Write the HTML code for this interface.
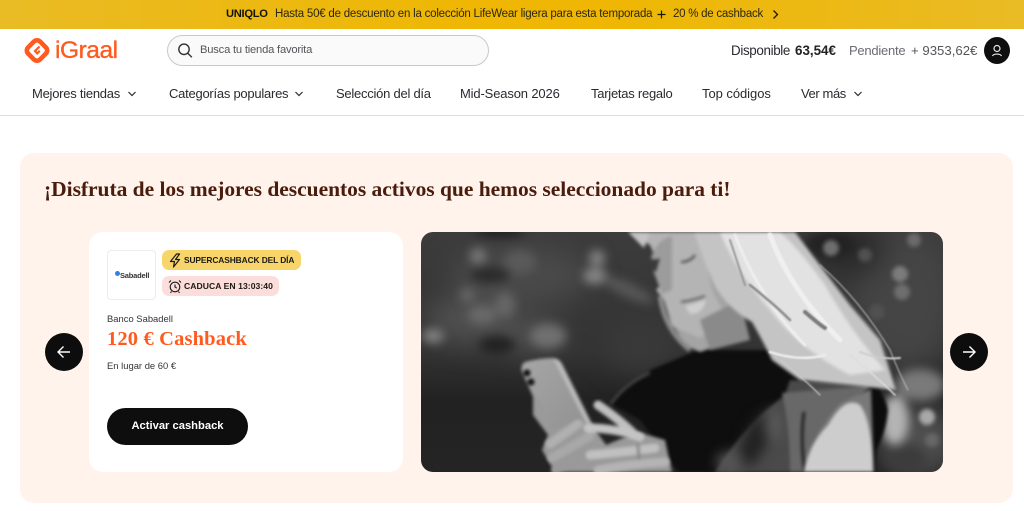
<!DOCTYPE html>
<html lang="es"><head><meta charset="utf-8"><title>iGraal</title>
<style>
*{box-sizing:border-box}
html,body{margin:0;padding:0;width:1024px;height:511px;overflow:hidden;background:#fff;font-family:"Liberation Sans",sans-serif;color:#26262b}
.a{position:absolute;white-space:nowrap}
#top{position:absolute;left:0;top:0;width:1024px;height:29px;background:linear-gradient(90deg,#e9bb25 0,#efb703 45%,#efb703 60%,#e9bb25 100%)}
.nav{top:85px;font-size:13px;line-height:18px;color:#2a2a30;letter-spacing:-.25px}
svg{position:absolute;display:block}
</style></head><body>
<div id="top"></div>
<div class="a" style="left:226px;top:7px;font-size:11.2px;line-height:14px;font-weight:700;color:#16140a;letter-spacing:-.3px">UNIQLO</div>
<div class="a" style="left:275px;top:7px;font-size:11.5px;line-height:14px;color:#2e2710;letter-spacing:-.22px">Hasta 50€ de descuento en la colección LifeWear ligera para esta temporada</div>
<svg style="left:656px;top:9px" width="11" height="11" viewBox="0 0 11 11"><path d="M5.500 1.500v8M1.500 5.500h8" stroke="#1e1a0a" stroke-width="1.200" fill="none"/></svg>
<div class="a" style="left:673px;top:7px;font-size:11.500px;line-height:14px;color:#2e2710;letter-spacing:-.25px">20 % de cashback</div>
<svg style="left:771px;top:9px" width="9" height="11" viewBox="0 0 9 11"><path d="M2.500 1.500l4 4-4 4" stroke="#1e1a0a" stroke-width="1.300" fill="none"/></svg>

<svg style="left:23px;top:36px" width="28" height="29" viewBox="0 0 28 29"><rect x="5.500" y="6" width="17" height="17" rx="4.500" transform="rotate(45 14 14.500)" fill="none" stroke="#ff5a1f" stroke-width="4.600"/><path d="M16.500 10.500l-4.500 4.500 2.200 2.400 2.600-2.600" fill="none" stroke="#ff5a1f" stroke-width="2.200"/></svg>
<div class="a" style="left:55px;top:36px;font-size:24.500px;line-height:29px;color:#ff5a1f;letter-spacing:-.45px;-webkit-text-stroke:.35px #ff5a1f">iGraal</div>

<div class="a" style="left:167px;top:35px;width:322px;height:31px;border:1px solid #c9c9c9;border-radius:16px;background:#fafafa"></div>
<svg style="left:177px;top:42px" width="16" height="17" viewBox="0 0 16 17"><circle cx="7" cy="7.300" r="5.200" fill="none" stroke="#333" stroke-width="1.400"/><path d="M10.800 11.200l4 4" stroke="#333" stroke-width="1.400"/></svg>
<div class="a" style="left:200px;top:43px;font-size:11.200px;line-height:14px;color:#55555a;letter-spacing:-.2px">Busca tu tienda favorita</div>

<div class="a" style="left:731px;top:43px;font-size:13.400px;line-height:16px;color:#2a2a30;letter-spacing:-.35px">Disponible</div>
<div class="a" style="left:795px;top:43px;font-size:13.400px;line-height:16px;font-weight:700;color:#222">63,54€</div>
<div class="a" style="left:849px;top:43px;font-size:13px;line-height:16px;color:#6c6c72;letter-spacing:-.25px">Pendiente</div>
<div class="a" style="left:911px;top:43px;font-size:13.200px;line-height:16px;color:#55555a">+ 9353,62€</div>
<div class="a" style="left:984px;top:37px;width:26px;height:27px;border-radius:50%;background:#0e0e0e"></div>
<svg style="left:984px;top:37px" width="26" height="27" viewBox="0 0 26 27"><circle cx="13" cy="11.500" r="3" fill="none" stroke="#e8e8e8" stroke-width="1.200"/><path d="M8.500 19c1-2.600 8-2.600 9 0" fill="none" stroke="#e8e8e8" stroke-width="1.200"/></svg>

<div class="a nav" style="left:32px">Mejores tiendas</div>
<svg style="left:127px;top:90px" width="10" height="8" viewBox="0 0 10 8"><path d="M1.500 2l3.500 3.500L8.500 2" fill="none" stroke="#2a2a30" stroke-width="1.200"/></svg>
<div class="a nav" style="left:169px">Categorías populares</div>
<svg style="left:294px;top:90px" width="10" height="8" viewBox="0 0 10 8"><path d="M1.500 2l3.500 3.500L8.500 2" fill="none" stroke="#2a2a30" stroke-width="1.200"/></svg>
<div class="a nav" style="left:336px">Selección del día</div>
<div class="a nav" style="left:460px;letter-spacing:-.15px">Mid-Season 2026</div>
<div class="a nav" style="left:591px">Tarjetas regalo</div>
<div class="a nav" style="left:702px;letter-spacing:-.05px">Top códigos</div>
<div class="a nav" style="left:801px;letter-spacing:-.4px">Ver más</div>
<svg style="left:853px;top:90px" width="10" height="8" viewBox="0 0 10 8"><path d="M1.500 2l3.500 3.500L8.500 2" fill="none" stroke="#2a2a30" stroke-width="1.200"/></svg>
<div class="a" style="left:0;top:115px;width:1024px;height:1px;background:#dedede"></div>

<div class="a" style="left:20px;top:153px;width:993px;height:350px;border-radius:14px;background:#fff3ec"></div>
<div class="a" style="left:44px;top:176px;font-family:'Liberation Serif',serif;font-weight:700;font-size:21.500px;line-height:26px;color:#4a1c0c;letter-spacing:-.03px">¡Disfruta de los mejores descuentos activos que hemos seleccionado para ti!</div>

<div class="a" style="left:89px;top:232px;width:314px;height:240px;border-radius:14px;background:#fff"></div>
<div class="a" style="left:107px;top:250px;width:49px;height:50px;border:1px solid #ececec;border-radius:4px;background:#fff"></div>
<div class="a" style="left:115px;top:271px;width:5px;height:5px;border-radius:50%;background:#2f80ed"></div>
<div class="a" style="left:120px;top:271px;font-size:7.500px;line-height:10px;font-weight:700;color:#333;letter-spacing:-.2px">Sabadell</div>

<div class="a" style="left:162px;top:250px;width:139px;height:20px;border-radius:7px;background:#f8d56b"></div>
<svg style="left:168px;top:253px" width="14" height="15" viewBox="0 0 14 15"><path d="M8.500 1L2.500 8.500H6.500L5.500 14l6-7.500H7.500L11.500 1Z" fill="none" stroke="#1b1b1b" stroke-width="1.200" stroke-linejoin="round"/></svg>
<div class="a" style="left:184px;top:254px;font-size:8.400px;line-height:12px;font-weight:700;color:#1c1a12;letter-spacing:-.1px">SUPERCASHBACK DEL DÍA</div>
<div class="a" style="left:162px;top:276px;width:117px;height:20px;border-radius:7px;background:#fbdedb"></div>
<svg style="left:168px;top:279px" width="14" height="15" viewBox="0 0 14 15"><circle cx="7" cy="8" r="4.800" fill="none" stroke="#1b1b1b" stroke-width="1.100"/><path d="M7 5.500V8l1.800 1.200M1 3.500L3 1.500M13 3.500L11 1.500M3.500 12.500L2.500 14M10.500 12.500l1 1.500" fill="none" stroke="#1b1b1b" stroke-width="1.100"/></svg>
<div class="a" style="left:184px;top:280px;font-size:8.600px;line-height:12px;font-weight:700;color:#1c1a12;letter-spacing:.05px">CADUCA EN 13:03:40</div>

<div class="a" style="left:107px;top:312px;font-size:9.400px;line-height:13px;color:#33333a;letter-spacing:.02px">Banco Sabadell</div>
<div class="a" style="left:107px;top:327px;font-family:'Liberation Serif',serif;font-weight:700;font-size:20.500px;line-height:24px;color:#ff5a1f;letter-spacing:.15px">120 € Cashback</div>
<div class="a" style="left:107px;top:359px;font-size:9.400px;line-height:13px;color:#33333a;letter-spacing:.02px">En lugar de 60 €</div>
<div class="a" style="left:107px;top:408px;width:141px;height:37px;border-radius:19px;background:#0e0e0e"></div>
<div class="a" style="left:107px;top:408px;width:141px;height:37px;text-align:center;font-size:11.200px;line-height:36px;font-weight:700;color:#fff">Activar cashback</div>

<div class="a" style="left:45px;top:333px;width:38px;height:38px;border-radius:50%;background:#0d0d0d"></div>
<svg style="left:45px;top:333px" width="38" height="38" viewBox="0 0 38 38"><path d="M25 19H13M18.500 13.500L13 19l5.500 5.500" fill="none" stroke="#fff" stroke-width="1.400"/></svg>
<div class="a" style="left:950px;top:333px;width:38px;height:38px;border-radius:50%;background:#0d0d0d"></div>
<svg style="left:950px;top:333px" width="38" height="38" viewBox="0 0 38 38"><path d="M13 19H25M19.500 13.500L25 19l-5.500 5.500" fill="none" stroke="#fff" stroke-width="1.400"/></svg>

<svg style="left:421px;top:232px;border-radius:12px" width="522" height="240" viewBox="421 232 522 240">
<defs>
<filter id="b1" x="-20%" y="-20%" width="140%" height="140%" color-interpolation-filters="sRGB"><feGaussianBlur stdDeviation="5"/></filter>
<filter id="b2" x="-20%" y="-20%" width="140%" height="140%" color-interpolation-filters="sRGB"><feGaussianBlur stdDeviation="14"/></filter>
<filter id="b3" x="-10%" y="-10%" width="120%" height="120%" color-interpolation-filters="sRGB"><feGaussianBlur stdDeviation="1.500"/></filter>
<filter id="b4" x="-10%" y="-10%" width="120%" height="120%" color-interpolation-filters="sRGB"><feGaussianBlur stdDeviation="2.200"/></filter>
<filter id="b5" x="-10%" y="-10%" width="120%" height="120%" color-interpolation-filters="sRGB"><feGaussianBlur stdDeviation=".7"/></filter>
<filter id="b6" x="-20%" y="-20%" width="140%" height="140%" color-interpolation-filters="sRGB"><feGaussianBlur stdDeviation="6"/></filter>
<linearGradient id="bg" x1="0" y1="0" x2="0" y2="1"><stop offset="0" stop-color="#3c3c3c"/><stop offset=".5" stop-color="#333"/><stop offset=".7" stop-color="#222"/><stop offset="1" stop-color="#242424"/></linearGradient>
<linearGradient id="ph" x1="0" y1="0" x2="1" y2="1"><stop offset="0" stop-color="#a6a6a6"/><stop offset="1" stop-color="#8c8c8c"/></linearGradient>
</defs>
<rect x="421" y="232" width="522" height="240" fill="url(#bg)"/>
<g filter="url(#b2)">
<ellipse cx="520" cy="275" rx="70" ry="30" fill="#4a4a4a"/>
<ellipse cx="470" cy="320" rx="45" ry="22" fill="#525252"/>
<ellipse cx="530" cy="335" rx="35" ry="16" fill="#525252"/>
<ellipse cx="640" cy="345" rx="35" ry="25" fill="#3a3a3a"/>
<ellipse cx="905" cy="300" rx="50" ry="70" fill="#454545"/>
<ellipse cx="850" cy="250" rx="35" ry="25" fill="#2a2a2a"/>
<ellipse cx="920" cy="440" rx="40" ry="35" fill="#505050"/>
</g>
<g filter="url(#b1)">
<circle cx="478" cy="256" r="8" fill="#7a7a7a"/><circle cx="597" cy="258" r="8" fill="#858585"/><ellipse cx="595" cy="276" rx="12" ry="8" fill="#888"/>
<circle cx="467" cy="295" r="7" fill="#686868"/><ellipse cx="482" cy="315" rx="14" ry="9" fill="#6a6a6a"/><ellipse cx="505" cy="305" rx="10" ry="13" fill="#666"/>
<ellipse cx="433" cy="336" rx="11" ry="7" fill="#838383"/><ellipse cx="548" cy="336" rx="18" ry="12" fill="#707070"/><ellipse cx="520" cy="262" rx="16" ry="12" fill="#5a5a5a"/>
<ellipse cx="628" cy="290" rx="28" ry="7" fill="#585858" transform="rotate(25 628 290)"/>
<ellipse cx="490" cy="275" rx="20" ry="8" fill="#2a2a2a"/><ellipse cx="497" cy="345" rx="18" ry="9" fill="#222"/>
<ellipse cx="500" cy="232" rx="25" ry="5" fill="#1c1c1c"/>
<ellipse cx="895" cy="420" rx="14" ry="25" fill="#b4b4b4"/><ellipse cx="920" cy="385" rx="25" ry="16" fill="#7a7a7a"/><ellipse cx="905" cy="458" rx="22" ry="14" fill="#3c3c3c"/>
<ellipse cx="830" cy="245" rx="25" ry="12" fill="#222"/>
</g>
<g filter="url(#b4)" fill="#858585">
<circle cx="831" cy="248" r="8" fill="#6e6e6e"/><circle cx="900" cy="274" r="8" fill="#7c7c7c"/><circle cx="902" cy="292" r="8" fill="#6e6e6e"/><circle cx="914" cy="240" r="7" fill="#6a6a6a"/><circle cx="865" cy="255" r="7" fill="#505050"/><circle cx="877" cy="312" r="8" fill="#505050"/>
<circle cx="927" cy="417" r="8" fill="#a8a8a8"/><circle cx="932" cy="440" r="7" fill="#666"/>
</g>
<g filter="url(#b3)">
<!-- shirt -->
<path d="M611 404Q625 385 653 369L698 350 770 350 800 376 880 384 875 472H678L640 420Z" fill="#0e0e0e"/>
<path d="M611 404Q625 384 650 373" fill="none" stroke="#4a4a4a" stroke-width="2.500"/>
<path d="M790 380L872 385 808 455 804 472H715Q745 425 785 395Z" fill="#4a4a4a"/>
<path d="M782 393L870 386 815 440 804 472H790Q790 430 782 393Z" fill="#686868"/>
</g>
<g filter="url(#b6)">
<ellipse cx="755" cy="440" rx="12" ry="30" fill="#222" transform="rotate(25 755 440)"/>
<ellipse cx="730" cy="462" rx="14" ry="10" fill="#555"/>
<ellipse cx="773" cy="425" rx="8" ry="16" fill="#5a5a5a"/>
</g>
<g filter="url(#b3)">
<path d="M804 412Q800 440 805 472" stroke="#222" stroke-width="3" fill="none"/>
<!-- armhole / arm -->
<path d="M869 387Q884 390 888 410 886 435 874 452Z" fill="#0c0c0c"/>
<path d="M804 472Q806 445 838 405 855 395 871 389L874 472Z" fill="#787878"/>
<path d="M804 472Q808 445 828 425 845 395 860 405 872 420 873 472Z" fill="#cdcdcd"/>
<!-- neck and face -->
<path d="M660 232H720L745 335 700 352 685 345 670 320Z" fill="#a4a4a4"/>
<path d="M628 232H700L712 290 728 320 700 338 672 326 664 300 656 290 665 280 650 245Z" fill="#b4b4b4"/>
<path d="M650 262Q655 240 672 236L672 290 662 294Z" fill="#9c9c9c"/>
<path d="M628 232L644 248 650 232Z" fill="#c4c4c4"/>
<path d="M646 255Q652 262 660 258L656 272 650 268Z" fill="#3a3a3a"/>
<path d="M681 262Q690 262 695 255" stroke="#444" stroke-width="2" fill="none"/>
<path d="M681 302Q695 300 705 296" stroke="#555" stroke-width="2" fill="none"/>
<path d="M685 306Q700 302 706 299 704 314 690 314Z" fill="#cfcfcf"/>
<path d="M660 296Q665 330 690 350" stroke="#8a8a8a" stroke-width="5" fill="none"/>
<path d="M700 320L740 300 750 340 710 350Z" fill="#8a8a8a"/>
<!-- hair -->
<path d="M694 232Q705 265 716 288 730 310 752 322 765 345 772 360L800 380 850 385 896 390 880 340 850 305 822 268 795 232Z" fill="#c4c4c4"/>
<path d="M720 232Q735 270 770 310 800 350 850 375L885 370Q850 330 825 285 800 250 780 232Z" fill="#e2e2e2"/>
</g>
<g fill="none" stroke-linecap="round" filter="url(#b5)">
<path d="M770 235Q790 290 840 340" stroke="#f0f0f0" stroke-width="5"/>
<path d="M735 235Q760 300 805 345" stroke="#eee" stroke-width="3"/>
<path d="M750 285Q775 305 790 320" stroke="#8a8a8a" stroke-width="2.500"/>
<path d="M805 312Q820 325 825 328" stroke="#7a7a7a" stroke-width="4"/>
<path d="M730 240Q740 270 745 285" stroke="#999" stroke-width="2"/>
<path d="M820 265Q860 300 890 350 900 375 908 390" stroke="#bbb" stroke-width="1"/>
<path d="M780 360Q800 375 820 395" stroke="#ccc" stroke-width="1.200"/>
<path d="M850 355Q880 380 895 395" stroke="#ddd" stroke-width="1.500"/>
<path d="M770 352Q800 362 825 355" stroke="#eee" stroke-width="2.500"/>
<path d="M860 352Q880 360 900 358" stroke="#ccc" stroke-width="2"/>
</g>
<g filter="url(#b3)">
<!-- phone -->
<path d="M525 362Q540 358 553 358 559 358 562 364L602 444 590 450 548 430 522 372Q520 365 525 362Z" fill="url(#ph)"/>
<path d="M553 359Q559 359 562 364L602 444 598 446 556 364Z" fill="#bcbcbc"/>
<circle cx="527" cy="373" r="3.500" fill="#111"/><circle cx="531" cy="382" r="3.500" fill="#111"/>
<!-- hand -->
<path d="M533 397Q540 395 545 412L550 430 580 420 592 425 606 445 637 432 665 440 672 472H555L542 450 548 435 533 415Z" fill="#9a9a9a"/>
</g>
<g fill="none" stroke-linecap="round" filter="url(#b3)">
<path d="M550 444L578 424" stroke="#b0b0b0" stroke-width="9"/>
<path d="M552 458L590 436" stroke="#a8a8a8" stroke-width="9"/>
<path d="M555 470L600 448" stroke="#999" stroke-width="8"/>
<path d="M598 405Q620 420 634 434" stroke="#c0c0c0" stroke-width="9"/>
<path d="M588 428Q615 428 640 437" stroke="#c4c4c4" stroke-width="9"/>
<path d="M590 455Q625 452 655 448" stroke="#c0c0c0" stroke-width="9"/>
<path d="M598 470Q630 464 665 462" stroke="#b4b4b4" stroke-width="9"/>
<path d="M638 445L639 458" stroke="#808080" stroke-width="2.500"/>
</g>
</svg>
</body></html>
